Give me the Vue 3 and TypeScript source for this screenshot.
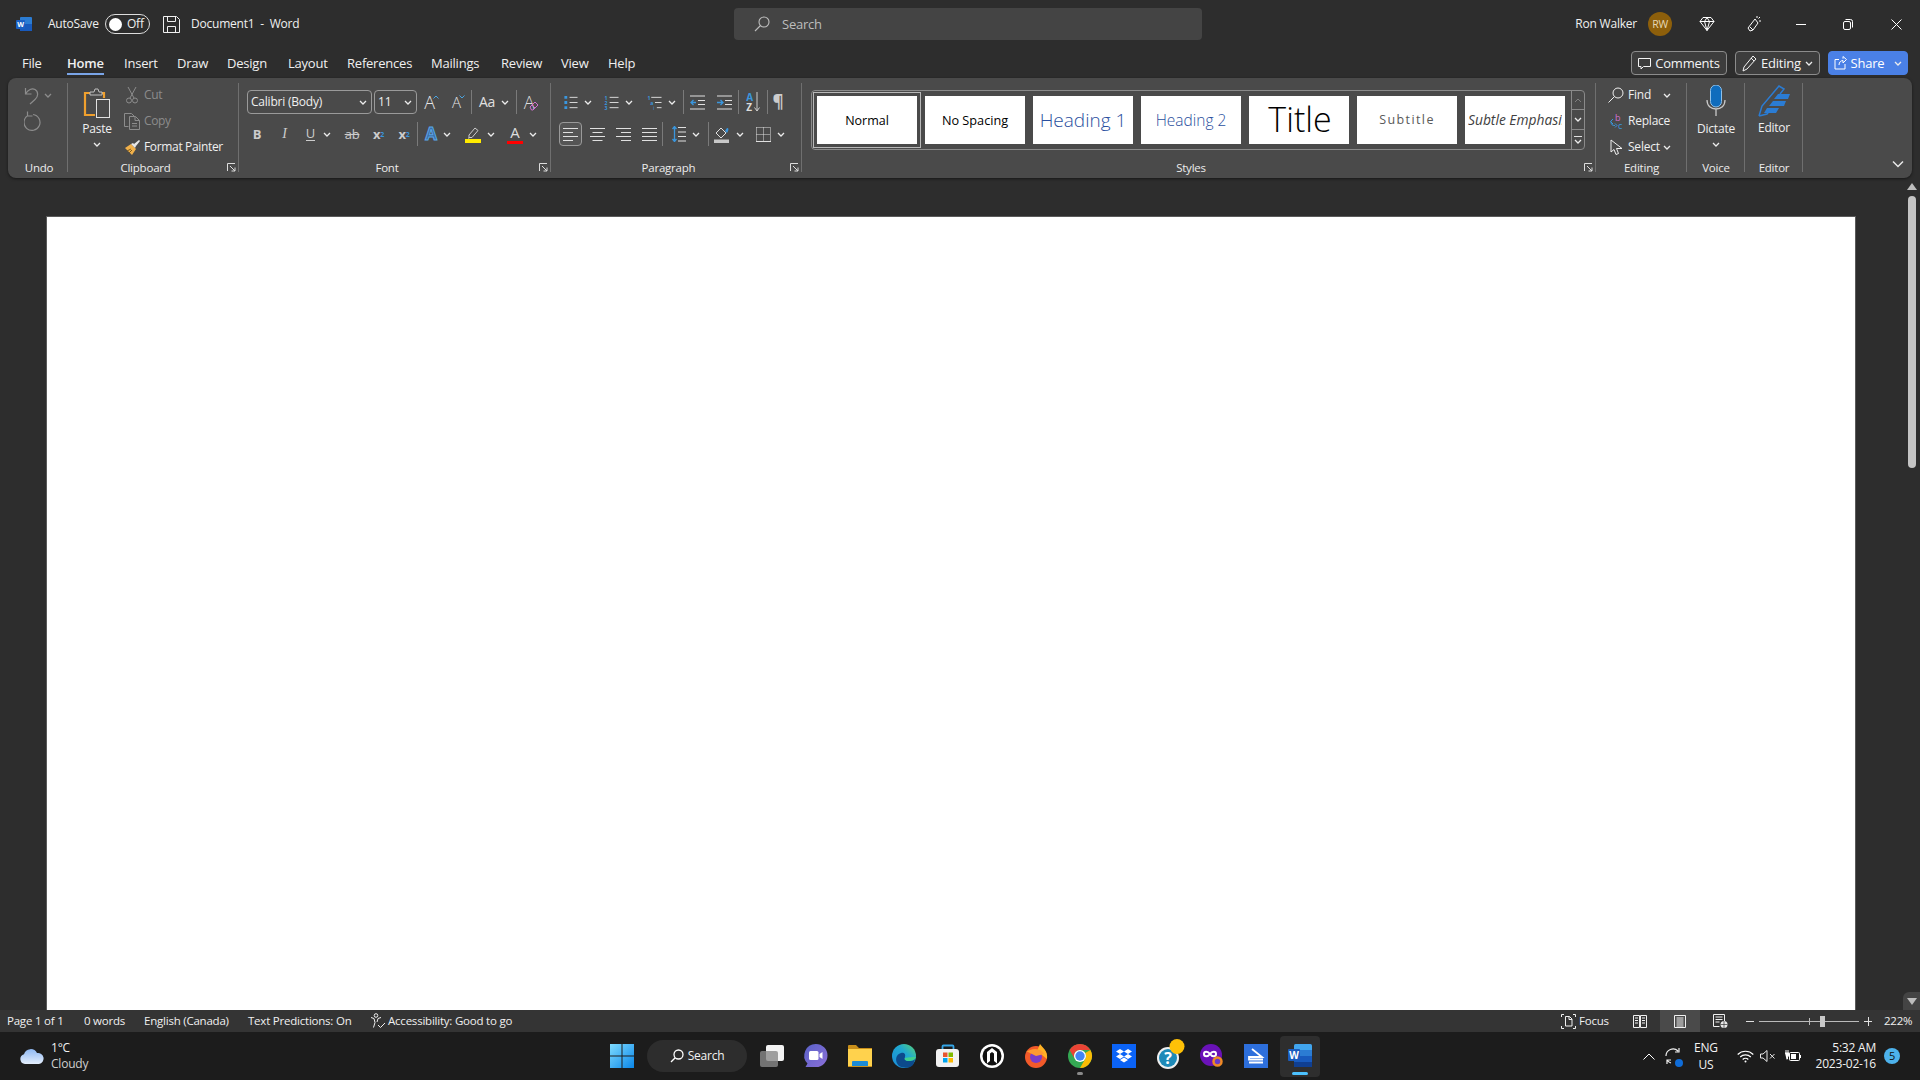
<script setup lang="ts">
import { h } from 'vue'

type Tab = { name: string, w: number }

const tabs: Tab[] = [
    { name: 'File', w: 45 }, { name: 'Home', w: 57 }, { name: 'Insert', w: 53 },
    { name: 'Draw', w: 50 }, { name: 'Design', w: 61 }, { name: 'Layout', w: 59 },
    { name: 'References', w: 84 }, { name: 'Mailings', w: 70 }, { name: 'Review', w: 60 },
    { name: 'View', w: 47 }, { name: 'Help', w: 40 },
]

const statusItems = [
    { t: 'Page 1 of 1', w: 77 }, { t: '0 words', w: 60 },
    { t: 'English (Canada)', w: 104 }, { t: 'Text Predictions: On', w: 122 },
]

// small shared glyphs
const Chev = () => h('svg', { class: 'chev', viewBox: '0 0 8 5' }, [
    h('path', { d: 'M1 1l3 3 3-3', fill: 'none', stroke: 'currentColor', 'stroke-width': '1.3' }),
])
const Launch = () => h('svg', { class: 'launch', viewBox: '0 0 9 9' }, [
    h('path', { d: 'M.5 8V.5H8M3 3l5 5M8 4.5V8H4.5', fill: 'none', stroke: 'currentColor' }),
])
</script>

<template>
    <div class="app">
        <header class="title">
            <div class="title-left">
                <svg class="word-mini" viewBox="0 0 16 16">
                    <rect x="4" y="1" width="12" height="14" rx="1" fill="#2b7cd3" />
                    <rect x="4" y="8" width="12" height="7" fill="#185abd" />
                    <rect x="0" y="4" width="9" height="9" rx="1" fill="#1a5fc4" />
                    <text x="4.5" y="11" font-size="7" font-weight="700" text-anchor="middle" fill="#fff">W</text>
                </svg>
                <span class="autosave">AutoSave</span>
                <span class="toggle"><i></i><b>Off</b></span>
                <svg class="save" viewBox="0 0 17 17" fill="none" stroke="currentColor">
                    <path d="M.5 .5h13l3 3v13H.5z" />
                    <path d="M4.500 .5v5h8v-5M4.500 16.500v-6h8v6" />
                </svg>
                <span class="docname">Document1&nbsp; -&nbsp; Word</span>
            </div>
            <div class="search">
                <svg viewBox="0 0 16 16" fill="none" stroke="currentColor" stroke-width="1.1">
                    <circle cx="10" cy="6" r="5" />
                    <path d="M6.500 9.500L1 15" />
                </svg>
                <span>Search</span>
            </div>
            <div class="title-right">
                <span class="user">Ron Walker</span>
                <span class="avatar">RW</span>
                <span class="win-btn w46">
                    <svg width="16" height="16" viewBox="0 0 16 16" fill="none" stroke="#fff">
                        <path d="M4 1.500h8l3 4-7 9-7-9zM1 5.500h14M5.500 5.500L8 14.500l2.500-9M5.500 5.500L8 1.500l2.500 4" />
                    </svg>
                </span>
                <span class="win-btn w47">
                    <svg width="16" height="18" viewBox="0 0 16 18" fill="none" stroke="#fff">
                        <path d="M9 4L2 13l2 3 3-1 5-7zM4 12l3 3" />
                        <path d="M11 1v2M14 2l-1.500 1.500M15 6h-2" />
                    </svg>
                </span>
                <span class="win-btn w47"><i class="min"></i></span>
                <span class="win-btn w48">
                    <svg width="10" height="11" viewBox="0 0 10 11" fill="none" stroke="#fff">
                        <rect x=".5" y="2.500" width="7" height="8" rx="1.500" />
                        <path d="M2.500 .5h5a2 2 0 0 1 2 2v6" />
                    </svg>
                </span>
                <span class="win-btn w48">
                    <svg width="11" height="11" viewBox="0 0 11 11" stroke="#fff"><path d="M.5 .5l10 10M10.500 .5l-10 10" /></svg>
                </span>
            </div>
        </header>

        <nav class="tabs">
            <div v-for="tab in tabs" :key="tab.name" class="tab" :class="{ on: tab.name === 'Home' }"
                :style="{ width: tab.w + 'px' }"><span>{{ tab.name }}</span></div>
            <div class="tab-actions">
                <button class="act comments">
                    <svg width="13" height="13" viewBox="0 0 13 13" fill="none" stroke="currentColor"><path d="M.5 1.500h12v8h-7L3 12V9.500H.5z" /></svg>
                    Comments
                </button>
                <button class="act editing">
                    <svg width="15" height="17" viewBox="0 0 15 17" fill="none" stroke="currentColor"><path d="M11 1l3 3-9 10-4 2 1-4zM9 3l3 3" /></svg>
                    Editing<Chev />
                </button>
                <button class="act share">
                    <svg width="13" height="14" viewBox="0 0 13 14" fill="none" stroke="currentColor"><path d="M5 3.500H1v9.500h10V8M5 9c0-3 2-4.500 4-4.500V7l3.500-3.500L9 .5v2.200" /></svg>
                    <span class="share-t">Share</span><Chev />
                </button>
            </div>
        </nav>

        <section class="ribbon">
            <div class="group g-undo">
                <div class="body col-rows">
                    <div class="row26 dim">
                        <svg width="16" height="19" viewBox="0 0 16 19" fill="none" stroke="currentColor" stroke-width="1.200"><path d="M1.500 2v6h6M1.500 8C4 3.500 8 2 11 3.500c3.500 2 3.500 7 0 10L6 18" /></svg>
                        <Chev />
                    </div>
                    <div class="row26 dim">
                        <svg width="17" height="21" viewBox="0 0 17 21" fill="none" stroke="currentColor" stroke-width="1.200"><path d="M4 4.500a8 8 0 1 0 5-1M3.500 .5v4.500h5" /></svg>
                    </div>
                </div>
                <div class="glabel lab-undo">Undo</div>
            </div>

            <div class="group g-clip">
                <div class="body split">
                    <div class="big paste">
                        <svg width="28" height="30" viewBox="0 0 28 30" fill="none">
                            <path d="M8 5H2v22h10M18 5h3v5" stroke="#f0a02e" stroke-width="2.200" />
                            <path d="M7 7V4h4l1-3h3l1 3h3v3z" stroke="#bfbfbf" fill="#4a4a4a" />
                            <rect x="13.500" y="11.500" width="13" height="18" stroke="#e0e0e0" fill="#4a4a4a" />
                        </svg>
                        <span class="big-t">Paste</span>
                        <Chev />
                    </div>
                    <div class="rows">
                        <div class="row26 dim">
                            <span class="ico">
                                <svg width="12" height="18" viewBox="0 0 12 18" fill="none" stroke="currentColor"><path d="M2 1l6 11M10 1L4 12" /><circle cx="3" cy="14.500" r="2.500" /><circle cx="9" cy="14.500" r="2.500" /></svg>
                            </span>Cut
                        </div>
                        <div class="row26 dim">
                            <span class="ico">
                                <svg width="17" height="17" viewBox="0 0 17 17" fill="none" stroke="currentColor"><path d="M4.500 13.500H.5V.5h7l3 3" /><path d="M5.500 3.500h6l4 4v9h-10zM11 3.500v4h4.500M8 10.500h5M8 13h5" /></svg>
                            </span>Copy
                        </div>
                        <div class="row26">
                            <span class="ico">
                                <svg width="17" height="16" viewBox="0 0 17 16"><path d="M1 9l6-4 5 5-4 6z" fill="#f0b04a" /><path d="M7 5l2-1 3 3-1 2zM10 5l5-4 1 1-4 5z" fill="#e8e8e8" /><path d="M3 12l4-2M5 14l3-3" stroke="#7a5a20" /></svg>
                            </span>Format Painter
                        </div>
                    </div>
                </div>
                <div class="glabel lab-l">Clipboard</div>
                <Launch />
            </div>

            <div class="group g-font">
                <div class="body">
                    <div class="tbar r1 pl8">
                        <div class="combo c-font"><span>Calibri (Body)</span><Chev /></div>
                        <div class="combo c-size"><span>11</span><Chev /></div>
                        <span class="cell w29"><span class="ab big-a">A</span><svg class="caret" width="6" height="4" viewBox="0 0 6 4" fill="none" stroke="#4aa3e0"><path d="M.5 3.500L3 1l2.500 2.500" /></svg></span>
                        <span class="cell w25"><span class="ab small-a">A</span><svg class="caret" width="6" height="4" viewBox="0 0 6 4" fill="none" stroke="#4aa3e0"><path d="M.5 .5L3 3l2.500-2.500" /></svg></span>
                        <i class="sep"></i>
                        <span class="cell w44"><span class="aa">Aa</span><Chev /></span>
                        <i class="sep"></i>
                        <span class="cell w29 gap0">
                            <span class="clear-a">A</span>
                            <svg class="eraser" width="10" height="10" viewBox="0 0 10 10" fill="none" stroke="#d070d0"><path d="M1 6l5-5 3 3-5 5H2.500zM3 4l3 3" /></svg>
                        </span>
                    </div>
                    <div class="tbar r2 pl5">
                        <span class="cell w26 fb">B</span>
                        <span class="cell w29 fi">I</span>
                        <span class="cell w39 gap8"><span class="fu">U</span><Chev /></span>
                        <span class="cell w28 fs">ab</span>
                        <span class="cell w25 fx">x<sub>2</sub></span>
                        <span class="cell w26 fx">x<sup>2</sup></span>
                        <i class="sep"></i>
                        <span class="cell w40"><span class="fa-fx">A</span><Chev /></span>
                        <span class="cell w44">
                            <svg width="16" height="17" viewBox="0 0 16 17"><path d="M4 9l6-7 3 2.500-6 7H4z" fill="none" stroke="#ccc" /><path d="M3 11l2 1-2 1z" fill="#aaa" /><rect y="13" width="16" height="4" fill="#ffeb00" /></svg>
                            <Chev />
                        </span>
                        <span class="cell w40">
                            <span class="fa-color">A</span>
                            <Chev />
                        </span>
                    </div>
                </div>
                <div class="glabel lab-l">Font</div>
                <Launch />
            </div>

            <div class="group g-para">
                <div class="body">
                    <div class="tbar r1 pl5">
                        <span class="cell w42">
                            <svg class="l15" viewBox="0 0 15 16"><path d="M1 1h3v3H1zM1 6.500h3v3H1zM1 12h3v3H1z" fill="#3a96dd" /><path d="M6.500 2.500H15M6.500 8H15M6.500 13.500H15" stroke="#e0e0e0" /></svg>
                            <Chev />
                        </span>
                        <span class="cell w41">
                            <svg class="l15" viewBox="0 0 15 16"><text x="0" y="5" font-size="5.500" fill="#3a96dd" font-weight="700">1</text><text x="0" y="10.500" font-size="5.500" fill="#3a96dd" font-weight="700">2</text><text x="0" y="16" font-size="5.500" fill="#3a96dd" font-weight="700">3</text><path d="M5.500 2.500H15M5.500 8H15M5.500 13.500H15" stroke="#e0e0e0" /></svg>
                            <Chev />
                        </span>
                        <span class="cell w44">
                            <svg class="l15" viewBox="0 0 15 16"><text x="0" y="5" font-size="5.500" fill="#3a96dd" font-weight="700">1</text><text x="3" y="10.500" font-size="5.500" fill="#3a96dd" font-weight="700">a</text><text x="6" y="16" font-size="5.500" fill="#3a96dd">i</text><path d="M4 2.500H15M8 8H15M10 13.500H15" stroke="#e0e0e0" /></svg>
                            <Chev />
                        </span>
                        <i class="sep"></i>
                        <span class="cell w27">
                            <svg class="l15" viewBox="0 0 15 14"><path d="M0 .5h15M8 5h7M8 9h7M0 13.500h15" stroke="#e0e0e0" /><path d="M6 7H1M3.500 4.500L1 7l2.500 2.500" stroke="#3a96dd" fill="none" stroke-width="1.300" /></svg>
                        </span>
                        <span class="cell w27">
                            <svg class="l15" viewBox="0 0 15 14"><path d="M0 .5h15M8 5h7M8 9h7M0 13.500h15" stroke="#e0e0e0" /><path d="M0 7h6M3.500 4.500L6 7 3.500 9.500" stroke="#3a96dd" fill="none" stroke-width="1.300" /></svg>
                        </span>
                        <i class="sep"></i>
                        <span class="cell w28 sort">
                            <span class="az"><b>A</b><b>Z</b></span>
                            <svg width="6" height="20" viewBox="0 0 6 20" fill="none" stroke="#ccc"><path d="M3 0v19M.5 15.500L3 19l2.500-3.500" /></svg>
                        </span>
                        <i class="sep"></i>
                        <span class="cell w20 pil">¶</span>
                    </div>
                    <div class="tbar r2 pl8">
                        <span class="cell align-on">
                            <svg class="l15" viewBox="0 0 15 13"><path d="M0 .5h15M0 4.500h10M0 8.500h15M0 12.500h10" stroke="#e0e0e0" /></svg>
                        </span>
                        <span class="cell w26 ml2"><svg class="l15" viewBox="0 0 15 13"><path d="M0 .5h15M2.500 4.500h10M0 8.500h15M2.500 12.500h10" stroke="#e0e0e0" /></svg></span>
                        <span class="cell w26"><svg class="l15" viewBox="0 0 15 13"><path d="M0 .5h15M5 4.500h10M0 8.500h15M5 12.500h10" stroke="#e0e0e0" /></svg></span>
                        <span class="cell w26"><svg class="l15" viewBox="0 0 15 13"><path d="M0 .5h15M0 4.500h15M0 8.500h15M0 12.500h15" stroke="#e0e0e0" /></svg></span>
                        <i class="sep"></i>
                        <span class="cell w45">
                            <svg width="14" height="16" viewBox="0 0 14 16" fill="none"><path d="M2.500 0v16M.5 3L2.500 .5 4.500 3M.5 13l2 2.500 2-2.500" stroke="#3a96dd" stroke-width="1.300" /><path d="M6 1.500h8M6 6h8M6 10.500h8M6 15h8" stroke="#e0e0e0" /></svg>
                            <Chev />
                        </span>
                        <i class="sep"></i>
                        <span class="cell w40">
                            <svg width="16" height="17" viewBox="0 0 16 17" fill="none"><path d="M2 7l5-5 5 5-5 5z" stroke="#e0e0e0" /><path d="M13 7c1-2 2-3 1-5-2 0-2 2-3 3" fill="#3a96dd" /><rect y="13.500" width="15" height="3.500" fill="#c8c8c8" /></svg>
                            <Chev />
                        </span>
                        <span class="cell w42">
                            <svg width="15" height="15" viewBox="0 0 15 15" fill="none" stroke="#e0e0e0"><path d="M.5 .5h14M.5 .5v14M14.500 .5v14M7.500 .5v14M.5 7.500h14" stroke-dasharray="1 1" /><path d="M0 14.500h15" /></svg>
                            <Chev />
                        </span>
                    </div>
                </div>
                <div class="glabel lab-l">Paragraph</div>
                <Launch />
            </div>

            <div class="group g-styles">
                <div class="body">
                    <div class="gallery">
                        <div class="style-item selected s-normal">Normal</div>
                        <div class="style-item s-normal s-nosp">No Spacing</div>
                        <div class="style-item s-h1">Heading 1</div>
                        <div class="style-item s-h2">Heading 2</div>
                        <div class="style-item s-title">Title</div>
                        <div class="style-item s-sub">Subtitle</div>
                        <div class="style-item s-emph"><span>Subtle Emphasis</span></div>
                        <div class="scroller">
                            <span class="sc-dim"><svg width="8" height="5" viewBox="0 0 8 5" fill="none" stroke="currentColor"><path d="M1 4l3-3 3 3" /></svg></span>
                            <span><Chev /></span>
                            <span class="more"><i></i><Chev /></span>
                        </div>
                    </div>
                </div>
                <div class="glabel lab-l">Styles</div>
                <Launch />
            </div>

            <div class="group g-edit">
                <div class="body">
                    <div class="rows edit-rows">
                        <div class="row26">
                            <span class="ico16">
                                <svg width="16" height="16" viewBox="0 0 16 16" fill="none" stroke="currentColor"><circle cx="10" cy="6" r="5" /><path d="M6.500 9.500L.5 15.500" /></svg>
                            </span>
                            <span class="t-find">Find</span><Chev />
                        </div>
                        <div class="row26">
                            <span class="ico16">
                                <svg width="15" height="17" viewBox="0 0 15 17"><text x="6" y="8" font-size="9" fill="#d070d0">b</text><text x="9" y="16" font-size="9" fill="#3a96dd">c</text><path d="M4 6L1.500 8.500 4 11M2 8.500c0 3 1 4 4 4M6 10.500l2 2-2 2" fill="none" stroke="#3a96dd" /></svg>
                            </span>
                            Replace
                        </div>
                        <div class="row26">
                            <span class="ico16">
                                <svg width="13" height="16" viewBox="0 0 13 16" fill="none" stroke="currentColor"><path d="M1 1v12l3-2.500 2 5 2.500-1-2-5H12z" /></svg>
                            </span>
                            <span>Select</span><Chev />
                        </div>
                    </div>
                </div>
                <div class="glabel">Editing</div>
            </div>

            <div class="group g-voice">
                <div class="body big dictate">
                    <svg width="20" height="31" viewBox="0 0 20 31" fill="none">
                        <rect x="4.500" y="0" width="11" height="22" rx="5.500" fill="#0f6cbd" stroke="#8fc1ea" />
                        <path d="M1 15c0 6 4 9 9 9s9-3 9-9M10 24v7" stroke="#c8c8c8" stroke-width="1.300" />
                    </svg>
                    <span class="big-t mic-t">Dictate</span>
                    <Chev />
                </div>
                <div class="glabel">Voice</div>
            </div>

            <div class="group g-editor">
                <div class="body big editor">
                    <svg width="32" height="32" viewBox="0 0 32 32" fill="none">
                        <path d="M1 31l3-10L21 1l5 3-4 5M1 31l8-2 4-5" stroke="#2b7cd3" stroke-width="1.500" />
                        <path d="M20 9h12l-2 5H16zM15 16h13l-2 5H11zM9 23h12l-3 5H6z" fill="#2b7cd3" />
                    </svg>
                    <span class="big-t ed-t">Editor</span>
                </div>
                <div class="glabel">Editor</div>
            </div>
            <svg class="collapse" width="12" height="8" viewBox="0 0 12 8" fill="none" stroke="#e8e8e8" stroke-width="1.500"><path d="M1 1.500l5 5 5-5" /></svg>
        </section>

        <main class="main">
            <div class="doc-area">
                <div class="page"></div>
            </div>
            <div class="vscroll">
                <span class="arrow up"></span>
                <span class="thumb"></span>
                <span class="arrow down"></span>
            </div>
        </main>

        <footer class="status">
            <span v-for="item in statusItems" :key="item.t" :style="{ width: item.w + 'px' }">{{ item.t }}</span>
            <span class="a11y">
                <svg width="16" height="16" viewBox="0 0 16 16" fill="none" stroke="currentColor"><circle cx="6" cy="2.500" r="1.800" /><path d="M1 4.500l3 1 1 4-1.500 5M11 4.500l-3 1-1 3.500M8 12l2.500 2.500L15 10" /></svg>
                Accessibility: Good to go
            </span>
            <div class="status-right">
                <span class="focus">
                    <svg width="15" height="15" viewBox="0 0 15 15" fill="none" stroke="currentColor"><path d="M.5 3V.5H3M12 .5h2.500V3M.5 12v2.500H3M12 14.500h2.500V12M4.500 12V2.500h4l2.500 2.500v7zM8 2.500V5.500h3" /></svg>
                    Focus
                </span>
                <span class="vw w27v">
                    <svg width="14" height="13" viewBox="0 0 14 13" fill="none" stroke="currentColor"><path d="M.5 .5h6v12h-6zM7.500 .5h6v12h-6zM2 3h3M2 5.500h3M2 8h3M9 3h3M9 5.500h3M9 8h3" /></svg>
                </span>
                <span class="vw w40v on">
                    <svg width="12" height="13" viewBox="0 0 12 13" fill="none" stroke="currentColor"><path d="M.5 .5h11v12H.5zM2.500 3h7M2.500 5h7M2.500 7h7M2.500 9h7M2.500 11h7" /></svg>
                </span>
                <span class="vw w40v">
                    <svg width="15" height="14" viewBox="0 0 15 14" fill="none"><path d="M.5 .5h11v7M.5 .5v12h6M2.500 3h7M2.500 5.500h7M2.500 8h4" stroke="currentColor" /><circle cx="11" cy="10.500" r="3.500" fill="#e8e8e8" /><path d="M7.500 10.500h7M11 7v7" stroke="#333" stroke-width=".7" /></svg>
                </span>
                <span class="zoom-minus"></span>
                <span class="slider"><i class="tick"></i><i class="knob"></i></span>
                <span class="zoom-plus"></span>
                <span class="pct">222%</span>
            </div>
        </footer>

        <footer class="taskbar">
            <div class="weather">
                <svg width="24" height="16" viewBox="0 0 24 16">
                    <defs><linearGradient id="cl" x1="0" y1="0" x2="0" y2="1"><stop offset="0" stop-color="#8fb8f2" /><stop offset="1" stop-color="#e4eefc" /></linearGradient></defs>
                    <path d="M5 16a5 5 0 0 1-1-9.800A7 7 0 0 1 17 5a5.500 5.500 0 0 1 2 11z" fill="url(#cl)" />
                </svg>
                <div class="w-text"><div>1°C</div><div class="dimmer">Cloudy</div></div>
            </div>
            <svg class="start" width="24" height="24" viewBox="0 0 24 24">
                <defs><linearGradient id="wn" x1="0" y1="0" x2="1" y2="1"><stop offset="0" stop-color="#7fdcff" /><stop offset="1" stop-color="#0a86e8" /></linearGradient></defs>
                <path d="M0 0h11.500v11.500H0zM12.500 0H24v11.500H12.500zM0 12.500h11.500V24H0zM12.500 12.500H24V24H12.500z" fill="url(#wn)" />
            </svg>
            <div class="pill">
                <svg width="14" height="14" viewBox="0 0 14 14" fill="none" stroke="#fff" stroke-width="1.300"><circle cx="8.500" cy="5.500" r="4.500" /><path d="M5.200 8.800L1 13" /></svg>
                Search
            </div>
            <div class="apps">
                <span class="app-cell">
                    <svg viewBox="0 0 24 24"><rect x="6" y="1" width="18" height="16" rx="2" fill="#f4f4f4" /><rect y="7" width="18" height="16" rx="2" fill="#8a8a8a" fill-opacity=".8" /></svg>
                </span>
                <span class="app-cell">
                    <svg viewBox="0 0 24 24"><defs><linearGradient id="tm" x1="0" y1="0" x2="1" y2="1"><stop offset="0" stop-color="#5a62c8" /><stop offset="1" stop-color="#8b6fd8" /></linearGradient></defs><path d="M12 0a11.500 11.500 0 0 1 0 23H1.500l2-3.500A11.500 11.500 0 0 1 12 0z" fill="url(#tm)" /><rect x="5" y="7" width="9.500" height="9" rx="1.500" fill="#fff" /><path d="M15.500 10l3-2v7l-3-2z" fill="#fff" /></svg>
                </span>
                <span class="app-cell">
                    <svg viewBox="0 0 24 24"><path d="M0 2a1 1 0 0 1 1-1h7l3 3h13v19H0z" fill="#c98f1a" /><rect y="5" width="24" height="18" fill="#ffd24d" /><rect x="4" y="17" width="16" height="6" rx="1" fill="#1b8bd6" /><rect y="22" width="24" height="1" fill="#c98f1a" /></svg>
                </span>
                <span class="app-cell">
                    <svg viewBox="0 0 24 24"><defs><linearGradient id="eg" x1="0" y1="1" x2="1" y2="0"><stop offset="0" stop-color="#1a8bd8" /><stop offset=".6" stop-color="#20a8d0" /><stop offset="1" stop-color="#5bd46e" /></linearGradient></defs><circle cx="12" cy="12" r="12" fill="url(#eg)" /><path d="M24 13c0 3-4 4-7 4-4 0-5-2-4-4 1-3-1-5-4-4-5 1-7 8-2 13 4 2 10 3 14-1z" fill="#0c4a8c" /><path d="M24 13c-1 3-5 4-7 4-4 0-5-2-4-3 3-1 9-1 11-1z" fill="#3ecf8e" /></svg>
                </span>
                <span class="app-cell">
                    <svg viewBox="0 0 24 24"><path d="M6.500 6V2.500a1 1 0 0 1 1-1h9a1 1 0 0 1 1 1V6" fill="none" stroke="#35a6e8" stroke-width="1.800" /><rect y="5" width="23" height="18" rx="3" fill="#f2f2f2" /><path d="M7 8.500h4.500V13H7z" fill="#e8562e" /><path d="M12.500 8.500H17V13h-4.500z" fill="#7fba00" /><path d="M7 14h4.500v4.500H7z" fill="#00a4ef" /><path d="M12.500 14H17v4.500h-4.500z" fill="#ffb900" /></svg>
                </span>
                <span class="app-cell">
                    <svg viewBox="0 0 24 24"><circle cx="12" cy="12" r="12" fill="#fff" /><circle cx="12" cy="12" r="9.500" fill="#111" /><path d="M7 19.500V8l5-4 5 4v11.500l-3-2.500V9.500l-2-1.500-2 1.500V17z" fill="#fff" /></svg>
                </span>
                <span class="app-cell">
                    <svg viewBox="0 0 24 24"><circle cx="12" cy="13" r="11" fill="#f25a2a" /><path d="M16 0c3 4 8 7 7 15L13 7z" fill="#ffb224" /><circle cx="12" cy="13" r="6" fill="#7a3cc8" /><path d="M2 7c3 0 5-2 9-2 6 0 9 4 9 5l-8 2z" fill="#ff9a30" /></svg>
                </span>
                <span class="app-cell">
                    <svg viewBox="0 0 24 24"><circle cx="12" cy="12" r="12" fill="#34a853" /><path d="M22.400 6A12 12 0 0 1 12 24l5.200-9a6 6 0 0 0 0-6z" fill="#fbbc05" /><path d="M12 0a12 12 0 0 1 10.400 6H12a6 6 0 0 0-5.200 9L1.600 6A12 12 0 0 1 12 0z" fill="#ea4335" /><circle cx="12" cy="12" r="6" fill="#fff" /><circle cx="12" cy="12" r="4.700" fill="#4285f4" /></svg>
                    <i class="dot"></i>
                </span>
                <span class="app-cell">
                    <svg viewBox="0 0 24 24"><rect width="24" height="24" fill="#0b63f6" /><path d="M8 5l4 2.500L8 10 4 7.500zM16 5l4 2.500-4 2.500-4-2.500zM8 10l4 2.500L8 15l-4-2.500zM16 10l4 2.500-4 2.500-4-2.500zM8 16l4-2.500 4 2.500-4 2.500z" fill="#fff" /></svg>
                </span>
                <span class="app-cell over">
                    <svg viewBox="0 0 24 24"><circle cx="12" cy="14" r="11" fill="#f0f0f0" /><circle cx="12" cy="14" r="9" fill="#1e8ab8" /><text x="12" y="20" font-size="16" font-weight="700" text-anchor="middle" fill="#fff">?</text><circle cx="21" cy="2.500" r="7.500" fill="#ffc107" /></svg>
                </span>
                <span class="app-cell">
                    <svg viewBox="0 0 24 24"><circle cx="11" cy="11" r="11" fill="#6a12b8" /><path d="M4 10c0-3 4-3 6 0s6 3 6 0-4-3-6 0-6 3-6 0z" fill="none" stroke="#fff" stroke-width="2" /><circle cx="17.500" cy="17.500" r="4" fill="#6a3cc8" stroke="#f08a24" stroke-width="2.500" /></svg>
                </span>
                <span class="app-cell">
                    <svg viewBox="0 0 24 24"><rect width="24" height="24" fill="#2d6fdc" /><path d="M8 5l10 8H5v2.500h14M5 18.500h14" fill="none" stroke="#fff" stroke-width="1.800" /></svg>
                </span>
                <span class="app-cell active">
                    <svg viewBox="0 0 24 24">
                        <rect x="6" width="18" height="23" rx="1.500" fill="#41a5ee" />
                        <rect x="6" y="6" width="18" height="6" fill="#2b7cd3" />
                        <rect x="6" y="12" width="18" height="6" fill="#185abd" />
                        <rect x="6" y="18" width="18" height="5" fill="#103f91" />
                        <rect y="5" width="12" height="12" rx="1" fill="#1a5cbd" />
                        <text x="6" y="14.500" font-size="10" font-weight="700" text-anchor="middle" fill="#fff">W</text>
                    </svg>
                    <i class="bar"></i>
                </span>
            </div>
            <div class="tray">
                <span class="tc w24">
                    <svg width="12" height="7" viewBox="0 0 12 7" fill="none" stroke="#fff"><path d="M.5 6.500L6 1l5.500 5.500" /></svg>
                </span>
                <span class="tc w24 sync">
                    <svg width="16" height="18" viewBox="0 0 16 18" fill="none" stroke="#f0f0f0" stroke-width="1.200"><path d="M1 9a7 7 0 0 1 12-5M14 1v4h-4M2 17v-4h4M2 13a7 7 0 0 0 4 3" /></svg>
                    <i class="sync-dot"></i>
                </span>
                <span class="lang"><span>ENG</span><span>US</span></span>
                <span class="tc w24 ml6">
                    <svg width="17" height="13" viewBox="0 0 17 13" fill="none" stroke="#fff" stroke-width="1.200"><path d="M.7 4.500a11 11 0 0 1 15.600 0M3.200 7a7.500 7.500 0 0 1 10.600 0M5.700 9.500a4 4 0 0 1 5.600 0" /><circle cx="8.500" cy="11.500" r="1" fill="#fff" stroke="none" /></svg>
                </span>
                <span class="tc w22">
                    <svg width="16" height="12" viewBox="0 0 16 12" fill="none" stroke="#e8e8e8"><path d="M.5 4h2.500L7 .5v11L3 8H.5zM10 4l4.500 4.500M14.500 4L10 8.500" /></svg>
                </span>
                <span class="tc w28">
                    <svg width="16" height="12" viewBox="0 0 16 12"><path d="M1 0v3M3 0v3M0 3h4v2.500L2.500 7v2h-1" stroke="#fff" fill="#fff" /><rect x="4.500" y="2.500" width="10" height="8" rx="1" fill="none" stroke="#fff" /><rect x="6" y="4" width="5" height="5" fill="#fff" /><rect x="15" y="5" width="1" height="3" fill="#fff" /></svg>
                </span>
                <span class="clock"><span>5:32 AM</span><span>2023-02-16</span></span>
                <span class="badge">5</span>
            </div>
        </footer>
    </div>
</template>

<style scoped>
.app {
    width: 1920px;
    height: 1080px;
    display: flex;
    flex-direction: column;
    overflow: hidden;
    background: #2d2d2d;
    color: #f0f0f0;
    font: 12px/16px "Open Sans", "Liberation Sans", sans-serif;
    letter-spacing: -0.22px;
}

/* top row */
.title {
    height: 48px;
    display: grid;
    grid-template-columns: 734px 468px 1fr;
    align-items: center;
}

.title-left,
.title-right {
    display: flex;
    align-items: center;
}

.word-mini {
    width: 16px;
    height: 16px;
    margin-left: 16px;
}

.autosave {
    margin-left: 16px;
    width: 52px;
    white-space: nowrap;
}

.toggle {
    margin-left: 5px;
    width: 45px;
    height: 20px;
    box-sizing: border-box;
    border: 1px solid #ddd;
    border-radius: 10px;
    display: flex;
    align-items: center;
    padding-left: 3px;
}

.toggle i {
    width: 13px;
    height: 13px;
    border-radius: 50%;
    background: #fff;
}

.toggle b {
    font-weight: 400;
    margin-left: 5px;
}

.save {
    width: 17px;
    height: 17px;
    margin-left: 13px;
}

.docname {
    margin-left: 11px;
    white-space: nowrap;
}

.search {
    height: 32px;
    background: #444;
    border-radius: 4px;
    display: flex;
    align-items: center;
    color: #bdbdbd;
    font-size: 13px;
}

.search svg {
    width: 16px;
    height: 16px;
    margin: 0 12px 0 20px;
}

.title-right {
    justify-content: flex-end;
}

.user {
    white-space: nowrap;
}

.avatar {
    margin-left: 11px;
    margin-right: 12px;
    width: 24px;
    height: 24px;
    border-radius: 50%;
    background: #8d5f0b;
    color: #e6d7b5;
    font-size: 10.500px;
    line-height: 24px;
    text-align: center;
}

.win-btn {
    height: 48px;
    display: flex;
    align-items: center;
    justify-content: center;
}

.w46 { width: 46px; }
.w47 { width: 47px; }
.w48 { width: 48px; }

.min {
    width: 10px;
    height: 1px;
    background: #fff;
}

/* tab row */
.tabs {
    height: 30px;
    display: flex;
    padding-left: 22px;
    box-sizing: border-box;
}

.tab {
    padding-top: 5px;
    font-size: 13px;
    white-space: nowrap;
}

.tab span {
    display: inline-block;
    line-height: 20px;
    border-bottom: 2px solid transparent;
}

.tab.on span {
    border-bottom-color: #7aa5e8;
    font-weight: 600;
}

.tab-actions {
    margin-left: auto;
    display: flex;
    gap: 8px;
    padding: 3px 12px 0 0;
}

.act {
    height: 24px;
    box-sizing: border-box;
    border: 1px solid #8c8c8c;
    border-radius: 4px;
    background: #3d3d3d;
    color: #f4f4f4;
    display: flex;
    align-items: center;
    justify-content: center;
    gap: 4px;
    padding: 0;
    font: 13px/16px "Open Sans", "Liberation Sans", sans-serif;
    letter-spacing: -0.22px;
}

.comments { width: 96px; }
.editing { width: 85px; }

.share {
    width: 80px;
    background: #4a80e6;
    border-color: #4a80e6;
    color: #fff;
}

.share-t {
    margin-right: 6px;
}

/* ribbon */
.ribbon {
    position: relative;
    height: 100px;
    margin: 0 8px;
    background: #4a4a4a;
    border-radius: 8px;
    display: flex;
    box-shadow: 0 1px 3px rgba(0, 0, 0, 0.5);
}

.group {
    position: relative;
    flex: none;
    height: 100px;
}

.group::after {
    content: "";
    position: absolute;
    right: 0;
    top: 5px;
    bottom: 6px;
    width: 1px;
    background: #6f6f6f;
}

.body {
    height: 80px;
    box-sizing: border-box;
    display: flow-root;
}

.glabel {
    height: 20px;
    line-height: 20px;
    text-align: center;
    font-size: 11.500px;
    color: #ececec;
}

.lab-l {
    padding-right: 16px;
}

.lab-undo {
    padding-left: 2px;
}

.g-undo { width: 60px; }
.g-clip { width: 171px; }
.g-font { width: 312px; }
.g-para { width: 251px; }
.g-styles { width: 794px; }
.g-edit { width: 91px; }
.g-voice { width: 58px; }
.g-editor { width: 58px; }

.col-rows {
    padding: 4px 0 0 16px;
}

.row26 {
    height: 26px;
    display: flex;
    align-items: center;
    white-space: nowrap;
}

.row26 .chev {
    margin-left: 4px;
}

.dim {
    color: #8c8c8c;
}

.dim .chev {
    color: inherit;
}

.split {
    display: flex;
}

.big {
    display: flex;
    flex-direction: column;
    align-items: center;
}

.paste {
    margin-left: 4px;
    width: 50px;
    padding-top: 10px;
}

.big-t {
    line-height: 18px;
    margin: 2px 0 4px;
}

.rows {
    padding-top: 4px;
    letter-spacing: -0.34px;
}

.ico {
    width: 20px;
    margin-right: 2px;
    display: flex;
    justify-content: center;
}

.launch {
    position: absolute;
    right: 3px;
    bottom: 6px;
    width: 9px;
    height: 9px;
    color: #dcdcdc;
}

.chev {
    width: 8px;
    height: 5px;
    flex: none;
    color: #ececec;
}

/* toolbars */
.tbar {
    display: flex;
    height: 24px;
    align-items: center;
}

.r1 { margin-top: 12px; }
.r2 { margin-top: 8px; }
.pl5 { padding-left: 5px; }
.pl8 { padding-left: 8px; }

.combo {
    height: 24px;
    box-sizing: border-box;
    border: 1px solid #9a9a9a;
    border-radius: 4px;
    display: flex;
    align-items: center;
    justify-content: space-between;
    padding: 0 4px 0 3px;
}

.c-font { width: 125px; margin-right: 2px; }
.c-size { width: 43px; }

.cell {
    position: relative;
    height: 24px;
    line-height: 24px;
    display: flex;
    align-items: center;
    justify-content: center;
    gap: 6px;
    flex: none;
}

.gap0 { gap: 0; }
.gap8 { gap: 8px; }

.w20 { width: 20px; }
.w25 { width: 25px; }
.w26 { width: 26px; }
.w27 { width: 27px; }
.w28 { width: 28px; }
.w29 { width: 29px; }
.w39 { width: 39px; }
.w40 { width: 40px; }
.w41 { width: 41px; }
.w42 { width: 42px; }
.w44 { width: 44px; }
.w45 { width: 45px; }

.ml2 { margin-left: 2px; }

.sep {
    width: 1px;
    height: 24px;
    background: #7a7a7a;
    flex: none;
}

.ab {
    font-weight: 300;
    color: #e6e6e6;
}

.big-a { font-size: 18px; margin-right: -4px; }
.small-a { font-size: 15px; margin-right: -4px; }

.caret {
    position: relative;
    top: -5px;
    margin-left: -4px;
}

.aa {
    font-size: 14px;
    color: #e0e0e0;
}

.clear-a {
    font-size: 18px;
    font-weight: 300;
    color: #ddd;
}

.eraser {
    margin: 8px 0 0 -5px;
}

.fb {
    font-weight: 700;
    color: #ccc;
    font-size: 13px;
}

.fi {
    font-style: italic;
    color: #ccc;
    font-family: "Liberation Serif", serif;
    font-size: 14px;
}

.fu {
    color: #ccc;
    border-bottom: 1px solid #ccc;
    line-height: 13px;
    font-size: 13px;
}

.fs {
    color: #ccc;
    text-decoration: line-through;
    font-size: 13px;
}

.fx {
    gap: 0;
    color: #ccc;
    font-weight: 700;
    font-size: 13px;
}

.fx sub,
.fx sup {
    color: #3a96dd;
    font-size: 7px;
    line-height: 7px;
}

.fa-fx {
    font-size: 17px;
    font-weight: 700;
    color: #3a6ea8;
    -webkit-text-stroke: 1px #5aa6e6;
}

.fa-color {
    font-size: 15px;
    line-height: 17px;
    color: #ddd;
    border-bottom: 3px solid #f00;
    width: 16px;
    text-align: center;
}

.l15 {
    width: 15px;
    height: 15px;
    flex: none;
}

.az {
    display: flex;
    flex-direction: column;
    font-size: 10px;
    line-height: 10px;
}

.az b:first-child {
    color: #3a96dd;
}

.az b {
    color: #ddd;
}

.sort {
    gap: 1px;
}

.pil {
    font-size: 17px;
    color: #ccc;
    font-weight: 700;
}

.align-on {
    width: 23px;
    box-sizing: border-box;
    border: 1px solid #9a9a9a;
    border-radius: 4px;
    background: #555;
}

/* styles gallery */
.gallery {
    margin: 12px 0 0 9px;
    width: 774px;
    height: 60px;
    box-sizing: border-box;
    border: 1px solid #8a8a8a;
    border-radius: 4px;
    padding-left: 5px;
    display: flex;
    align-items: center;
    gap: 8px;
}

.style-item {
    width: 100px;
    height: 48px;
    line-height: 48px;
    flex: none;
    background: #fff;
    color: #000;
    text-align: center;
    overflow: hidden;
    white-space: nowrap;
    letter-spacing: 0;
}

.selected {
    outline: 1px solid #b8b8b8;
    outline-offset: 3px;
}

.s-normal { font-size: 12.500px; line-height: 49px; }
.s-nosp { font-size: 12.700px; }
.s-h1 { font-size: 19px; color: #2a4f9e; font-weight: 300; }
.s-h2 { font-size: 15.500px; color: #2a4f9e; font-weight: 300; }
.s-title { font-size: 34px; font-weight: 300; line-height: 46px; padding-left: 2px; box-sizing: border-box; }
.s-sub { font-size: 12.500px; color: #595959; letter-spacing: 1.400px; }

.s-emph {
    text-align: left;
    padding-left: 3px;
    box-sizing: border-box;
    font-size: 13.800px;
    font-style: italic;
    color: #404040;
}

.s-emph span {
    display: block;
    width: 94px;
    overflow: hidden;
}

.scroller {
    margin-left: -2px;
    width: 15px;
    height: 58px;
    display: flex;
    flex-direction: column;
    justify-content: space-between;
    border-left: 1px solid #8a8a8a;
    box-sizing: border-box;
}

.scroller span {
    height: 19px;
    display: flex;
    flex-direction: column;
    align-items: center;
    justify-content: center;
    border-bottom: 1px solid #8a8a8a;
    color: #e0e0e0;
    box-sizing: border-box;
}

.scroller span:last-child {
    border-bottom: 0;
}

.sc-dim {
    color: #808080 !important;
}

.more i {
    width: 8px;
    height: 1px;
    background: #e0e0e0;
    margin-bottom: 2px;
}

/* editing, voice, editor */
.edit-rows {
    padding-left: 12px;
    letter-spacing: -0.22px;
}

.ico16 {
    width: 16px;
    margin-right: 4px;
    display: flex;
    justify-content: center;
}

.t-find {
    width: 32px;
}

.edit-rows .row26 .chev {
    margin-left: 3px;
}

.dictate {
    padding-top: 7px;
}

.mic-t {
    margin-top: 4px;
}

.editor {
    padding-top: 7px;
}

.ed-t {
    margin-top: 2px;
}

.collapse {
    position: absolute;
    right: 8px;
    bottom: 10px;
}

/* document */
.main {
    flex: 1;
    min-height: 0;
    display: flex;
}

.doc-area {
    flex: 1;
    padding: 39px 0 0 47px;
    box-sizing: border-box;
    min-width: 0;
}

.page {
    width: 1808px;
    height: 100%;
    background: #fff;
    box-shadow: 0 0 0 1px #5a5a5a;
}

.vscroll {
    width: 17px;
    display: flex;
    flex-direction: column;
    align-items: center;
}

.arrow {
    width: 17px;
    height: 17px;
    flex: none;
    display: flex;
    align-items: center;
    justify-content: center;
}

.arrow::before {
    content: "";
    border-left: 5px solid transparent;
    border-right: 5px solid transparent;
}

.arrow.up::before {
    border-bottom: 7px solid #bdbdbd;
}

.arrow.down {
    margin-top: auto;
    background: #444;
    border-radius: 6px 0 0 0;
    height: 18px;
}

.arrow.down::before {
    border-top: 7px solid #bdbdbd;
}

.thumb {
    width: 8px;
    height: 272px;
    margin-top: 1px;
    background: #c4c4c4;
    border-radius: 4px;
}

/* status bar */
.status {
    height: 22px;
    background: #343434;
    display: flex;
    align-items: center;
    padding-left: 7px;
    font-size: 11.500px;
    white-space: nowrap;
}

.a11y {
    display: flex;
    align-items: center;
    gap: 2px;
}

.status-right {
    margin-left: auto;
    display: flex;
    align-items: center;
    height: 22px;
}

.focus {
    width: 72px;
    display: flex;
    align-items: center;
    gap: 3px;
}

.vw {
    height: 22px;
    display: flex;
    align-items: center;
}

.w27v { width: 27px; }

.w40v {
    width: 40px;
    justify-content: center;
}

.vw.on {
    background: #4a4a4a;
}

.w40v + .w40v {
    margin-right: 4px;
}

.zoom-minus,
.zoom-plus {
    position: relative;
    width: 12px;
    height: 12px;
}

.zoom-minus::before,
.zoom-plus::before {
    content: "";
    position: absolute;
    left: 2px;
    right: 2px;
    top: 6px;
    height: 1px;
    background: #e0e0e0;
}

.zoom-plus::after {
    content: "";
    position: absolute;
    left: 6px;
    top: 2px;
    bottom: 1px;
    width: 1px;
    background: #e0e0e0;
}

.slider {
    position: relative;
    width: 100px;
    height: 1px;
    margin: 0 3px;
    background: #bbb;
}

.tick {
    position: absolute;
    left: 50px;
    top: -3px;
    width: 1px;
    height: 7px;
    background: #bbb;
}

.knob {
    position: absolute;
    left: 61px;
    top: -5px;
    width: 5px;
    height: 11px;
    background: #c8c8c8;
}

.pct {
    width: 36px;
    margin-left: 10px;
}

/* taskbar */
.taskbar {
    height: 48px;
    background: #1c1c1c;
    display: flex;
    align-items: center;
    color: #f2f2f2;
}

.weather {
    width: 610px;
    box-sizing: border-box;
    padding-left: 20px;
    display: flex;
    align-items: center;
    gap: 7px;
    font-size: 12px;
    line-height: 16px;
}

.dimmer {
    color: #cfcfcf;
}

.start {
    flex: none;
}

.pill {
    margin: 0 3px 0 13px;
    width: 100px;
    height: 32px;
    background: #2d2d2d;
    border-radius: 16px;
    display: flex;
    align-items: center;
    justify-content: center;
    gap: 4px;
}

.apps {
    display: flex;
}

.app-cell {
    position: relative;
    width: 44px;
    height: 48px;
    display: flex;
    align-items: center;
    justify-content: center;
}

.app-cell svg {
    position: relative;
    width: 24px;
    height: 24px;
    overflow: visible;
}

.app-cell.active::before {
    content: "";
    position: absolute;
    left: 2px;
    right: 2px;
    top: 4px;
    bottom: 3px;
    background: #2e2e2e;
    border-radius: 4px;
}

.bar {
    position: absolute;
    left: 14px;
    bottom: 5px;
    width: 16px;
    height: 3px;
    border-radius: 2px;
    background: #4cc2ff;
}

.dot {
    position: absolute;
    left: 19px;
    bottom: 5px;
    width: 6px;
    height: 3px;
    border-radius: 2px;
    background: #8a8a8a;
}

.tray {
    margin-left: auto;
    display: flex;
    align-items: center;
    padding-right: 20px;
}

.tc {
    position: relative;
    display: flex;
    align-items: center;
    justify-content: center;
    height: 24px;
}

.w24 { width: 24px; }
.w22 { width: 22px; }
.ml6 { margin-left: 6px; }
.tc.w28 { width: 28px; }

.sync-dot {
    position: absolute;
    right: 2px;
    bottom: 1px;
    width: 8px;
    height: 8px;
    border-radius: 50%;
    background: #0f6cd8;
}

.lang {
    width: 42px;
    display: flex;
    flex-direction: column;
    align-items: center;
    line-height: 17px;
}

.clock {
    width: 69px;
    display: flex;
    flex-direction: column;
    align-items: flex-end;
    line-height: 16px;
    white-space: nowrap;
}

.badge {
    margin-left: 8px;
    width: 16px;
    height: 16px;
    border-radius: 50%;
    background: #4db2ec;
    color: #111;
    font-size: 11px;
    line-height: 16px;
    text-align: center;
}
</style>

<style>
html,
body {
    margin: 0;
    overflow: hidden;
    background: #2d2d2d;
}
</style>
